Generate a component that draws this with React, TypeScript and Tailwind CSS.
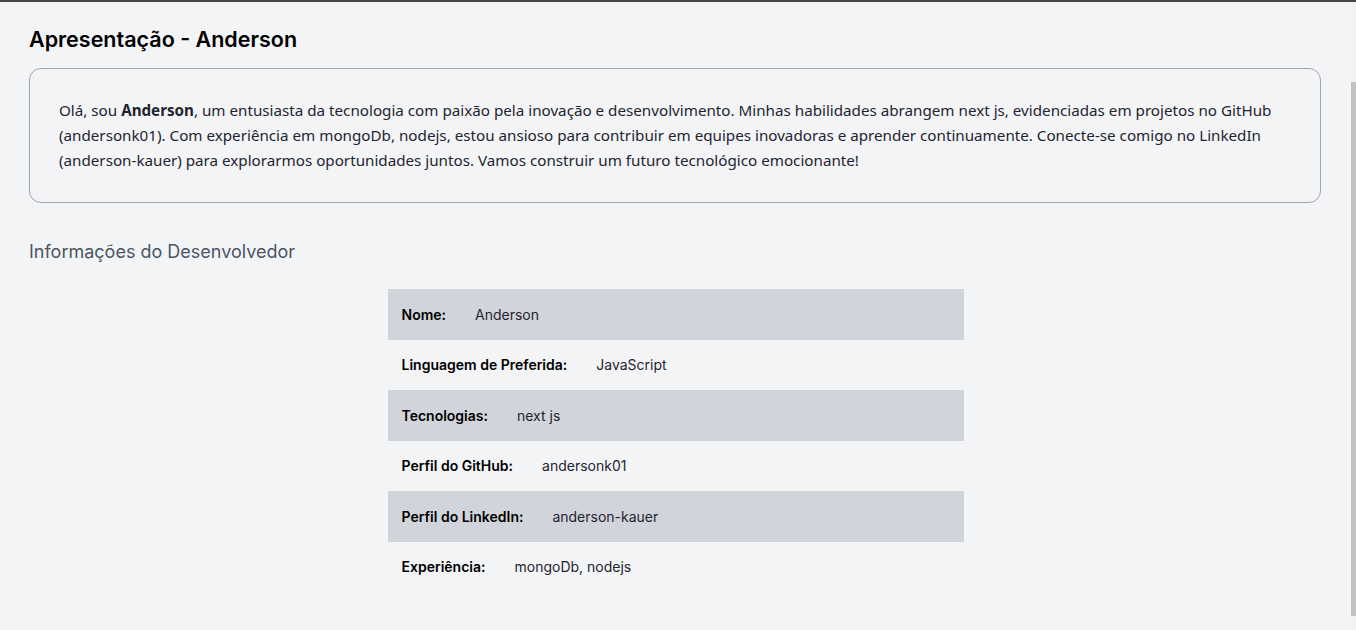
const rows = [
  { label: "Nome:", value: "Anderson" },
  { label: "Linguagem de Preferida:", value: "JavaScript" },
  { label: "Tecnologias:", value: "next js" },
  { label: "Perfil do GitHub:", value: "andersonk01" },
  { label: "Perfil do LinkedIn:", value: "anderson-kauer" },
  { label: "Experiência:", value: "mongoDb, nodejs" },
];

export default function App() {
  return (
    <div className="h-[630px] overflow-hidden border-t-2 border-[#454545] bg-[#f3f4f6] flex">
      <main className="flex-1 px-[29px] pt-[22px] font-['Inter',sans-serif]">
        <h1 className="text-[21.5px] leading-[30px] font-semibold text-black">
          Apresentação - Anderson
        </h1>

        {/* intro card */}
        <section className="mt-[14px] mr-[1px] rounded-xl border border-[#a1a3b0] px-[29px] py-[29px]">
          <p className="font-['Noto_Sans',sans-serif] text-[15.2px] leading-[25px] text-[#1f2430]">
            Olá, sou <strong className="font-bold">Anderson</strong>, um entusiasta da tecnologia com paixão pela
            inovação e desenvolvimento. Minhas habilidades abrangem next js, evidenciadas em projetos no GitHub
            (andersonk01). Com experiência em mongoDb, nodejs, estou ansioso para contribuir em equipes inovadoras e
            aprender continuamente. Conecte-se comigo no LinkedIn (anderson-kauer) para explorarmos oportunidades
            juntos. Vamos construir um futuro tecnológico emocionante!
          </p>
        </section>

        <h2 className="mt-[36px] text-[18px] leading-[26px] text-[#4b5563]">Informações do Desenvolvedor</h2>

        {/* dev info table */}
        <div className="mt-[24px] flex justify-center">
          <div className="w-[576px]">
            {rows.map((r, i) => (
              <div
                key={r.label}
                className={`h-[50.5px] flex items-center gap-[29px] px-[14px] text-[14px] ${
                  i % 2 === 0 ? "bg-[#d1d5db]" : ""
                }`}
              >
                <span className="font-semibold text-black">{r.label}</span>
                <span className="text-[#1f2430]">{r.value}</span>
              </div>
            ))}
          </div>
        </div>
      </main>

      {/* thin overlay scrollbar */}
      <div className="w-[5px] flex flex-col bg-[#f1f1f1]">
        <div className="h-[80px]" />
        <div className="flex-1 bg-[#c1c1c1]" />
        <div className="h-[14px]" />
      </div>
    </div>
  );
}
